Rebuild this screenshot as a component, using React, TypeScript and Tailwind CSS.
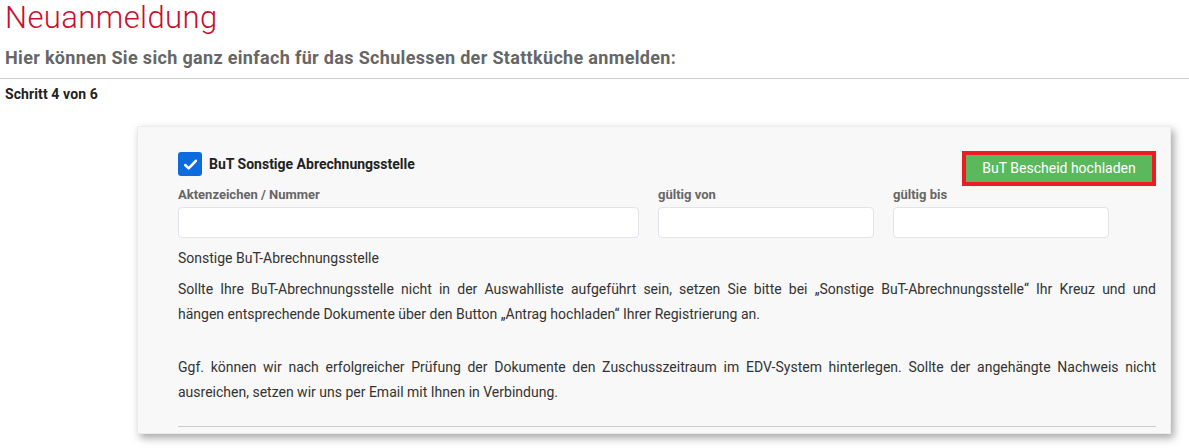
import React from 'react';

const font = { fontFamily: 'Roboto, "Noto Sans", sans-serif' };

const Field = ({ label, width }: { label: string; width: string }) => (
  <div className={`flex flex-col ${width}`}>
    <label className="text-[13px] font-bold text-[#666] leading-[16px] h-[16px] mb-[4px]">{label}</label>
    <input className="h-[31px] w-full rounded-[4px] border border-[#e1e4e8] bg-white" />
  </div>
);

const App = () => {
  return (
    <div className="w-[1189px] h-[448px] overflow-hidden bg-white text-[#333]" style={font}>
      <h1 className="pl-[5px] text-[31px] font-light leading-[36px] tracking-[0.4px] text-[#c8102e]">
        Neuanmeldung
      </h1>
      <h2 className="pl-[5px] mt-[11px] text-[18px] font-bold leading-[22px] tracking-[0.33px] text-[#666]">
        Hier können Sie sich ganz einfach für das Schulessen der Stattküche anmelden:
      </h2>
      <hr className="mt-[9px] border-t border-[#ccc]" />
      <p className="pl-[5px] mt-[7px] text-[14px] font-bold leading-[16px] tracking-[0.1px] text-[#222]">Schritt 4 von 6</p>

      <div className="ml-[137px] mt-[24px] w-[1034px] bg-[#f8f8f8] border border-[#ececec] shadow-[3px_4px_8px_rgba(0,0,0,0.35)] pl-[40px] pr-[14px] pt-[24px] pb-[6px]">
        <div className="flex items-start justify-between">
          <div className="flex items-center gap-[7px] pt-[1px]">
            <span className="flex h-[24px] w-[24px] items-center justify-center rounded-[3px] bg-[#0d6be0]">
              <svg width="17" height="17" viewBox="0 0 16 16" fill="none">
                <path d="M3 8.5l3.3 3.2L13 4.5" stroke="white" strokeWidth="2.4" strokeLinecap="round" strokeLinejoin="round" />
              </svg>
            </span>
            <span className="text-[14px] font-bold text-[#222]">BuT Sonstige Abrechnungsstelle</span>
          </div>
          <div className="border-[4px] border-[#ed1c24]">
            <button className="h-[27px] w-[186px] bg-[#5cb85c] text-[14px] text-white">BuT Bescheid hochladen</button>
          </div>
        </div>

        <div className="mt-[1px] flex gap-[19px]">
          <Field label="Aktenzeichen / Nummer" width="w-[461px]" />
          <Field label="gültig von" width="w-[216px]" />
          <Field label="gültig bis" width="w-[216px]" />
        </div>

        <p className="mt-[10px] text-[14px] leading-[20px]">Sonstige BuT-Abrechnungsstelle</p>

        <div className="mt-[9px] text-[14px] leading-[25px]">
          <span className="block text-justify [text-align-last:justify]">
            Sollte Ihre BuT-Abrechnungsstelle nicht in der Auswahlliste aufgeführt sein, setzen Sie bitte bei „Sonstige BuT-Abrechnungsstelle“ Ihr Kreuz und und
          </span>
          <span className="block">hängen entsprechende Dokumente über den Button „Antrag hochladen“ Ihrer Registrierung an.</span>
          <span className="block h-[28px]" />
          <span className="block text-justify [text-align-last:justify]">
            Ggf. können wir nach erfolgreicher Prüfung der Dokumente den Zuschusszeitraum im EDV-System hinterlegen. Sollte der angehängte Nachweis nicht
          </span>
          <span className="block">ausreichen, setzen wir uns per Email mit Ihnen in Verbindung.</span>
        </div>

        <hr className="mt-[21px] border-t border-[#ccc]" />
      </div>
    </div>
  );
};

export default App;
